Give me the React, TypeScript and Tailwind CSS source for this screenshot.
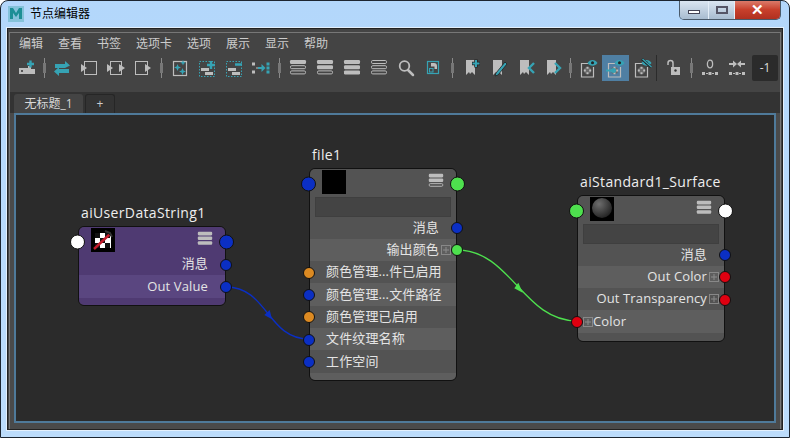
import React from "react";

const TEAL = "#36a3b4";
const GREY = "#bdbdbd";

const menus = ["编辑", "查看", "书签", "选项卡", "选项", "展示", "显示", "帮助"];

function Svg({ children, size = 20 }: { children: React.ReactNode; size?: number }) {
  return (
    <svg width={size} height={size} viewBox="0 0 20 20" fill="none">
      {children}
    </svg>
  );
}

function Stack({ fills, size }: { fills: boolean[]; size?: number }) {
  return (
    <Svg size={size}>
      {fills.map((f, i) => (
        <rect
          key={i}
          x={f ? 2 : 2.5}
          y={(f ? 2 : 2.5) + i * 5.2}
          width={f ? 16 : 15}
          height={f ? 4 : 3}
          rx="1.2"
          fill={f ? GREY : "none"}
          stroke={GREY}
          strokeWidth={f ? 0 : 1}
        />
      ))}
    </Svg>
  );
}

function Bookmark({ children }: { children: React.ReactNode }) {
  return (
    <Svg>
      <path d="M4 2h9v15l-3-3-2 2-1-2-3 3z" fill={GREY} />
      {children}
    </Svg>
  );
}

function NodeFrame() {
  return (
    <>
      <path d="M9 5.500H2.500v13.500h12V9" stroke={GREY} strokeWidth="1.200" />
      <circle cx="8.500" cy="12.500" r="3.600" fill="#6a6a6a" />
      <path d="M7.500 8.800h2v2h-2zM4.800 11.500h2v2h-2zM10.200 11.500h2v2h-2zM7.500 14.200h2v2h-2z" fill={GREY} />
    </>
  );
}

function Eye() {
  return (
    <g>
      <path d="M8.500 5c2.300-4 7.700-4 10 0-2.300 3.500-7.700 3.500-10 0z" fill={TEAL} />
      <circle cx="13.500" cy="4.700" r="1.500" fill="#222" />
    </g>
  );
}

const dotBox = <rect x="2.500" y="3.500" width="15" height="15" stroke={TEAL} strokeDasharray="1.500 1.500" />;
const dotBars = (
  <>
    <rect x="4" y="10" width="8" height="3" fill={GREY} />
    <rect x="8" y="14" width="8" height="3" fill={GREY} />
  </>
);

const icons: Record<string, React.ReactNode> = {
  add: (
    <Svg>
      <path d="M2 10h9V8h3v3h4v5H2z" fill={GREY} />
      <circle cx="5" cy="13" r="1" fill="#333" />
      <path d="M10 6h7M13.500 2.500v7" stroke={TEAL} strokeWidth="2.400" />
    </Svg>
  ),
  swap: (
    <Svg>
      <path d="M3 6h10V3l5 4.500-5 2.500H3z" fill={TEAL} />
      <path d="M17 11H7V9L2 13.500 7 18v-3h10z" fill={TEAL} />
    </Svg>
  ),
  inLeft: (
    <Svg>
      <rect x="5.500" y="3.500" width="12" height="13" stroke={GREY} />
      <path d="M2 6l6 4-6 4z" fill={GREY} />
    </Svg>
  ),
  inBoth: (
    <Svg>
      <rect x="4.500" y="3.500" width="11" height="13" stroke={GREY} />
      <path d="M1 6l6 4-6 4zM13 6l6 4-6 4z" fill={GREY} />
    </Svg>
  ),
  inRight: (
    <Svg>
      <rect x="2.500" y="3.500" width="12" height="13" stroke={GREY} />
      <path d="M12 6l6 4-6 4z" fill={GREY} />
    </Svg>
  ),
  sparkle: (
    <Svg>
      <rect x="3.500" y="3.500" width="13" height="14" stroke={GREY} strokeWidth="1.200" />
      <path d="M7.500 6l1 2.500 2.500 1-2.500 1-1 2.500-1-2.500-2.500-1 2.500-1z" fill={TEAL} />
      <path d="M13 2l.8 2 2 .8-2 .8-.8 2-.8-2-2-.8 2-.8z" fill={TEAL} />
      <path d="M12.500 10l1 2.500 2.500 1-2.500 1-1 2.500-1-2.500-2.500-1 2.500-1z" fill={TEAL} />
    </Svg>
  ),
  dotPlus: (
    <Svg>
      {dotBox}
      {dotBars}
      <path d="M10 7h8M14 3v8" stroke={TEAL} strokeWidth="2.400" />
    </Svg>
  ),
  dotMinus: (
    <Svg>
      {dotBox}
      {dotBars}
      <path d="M11 6.500h7" stroke={TEAL} strokeWidth="2.400" />
    </Svg>
  ),
  links: (
    <Svg>
      <path d="M1 4.500h3v3H1zM1 12.500h3v3H1zM5 9.500h2v1H5z" fill={GREY} />
      <path d="M7 9h3.500V6l4 4-4 4v-3H7z" fill={TEAL} />
      <path d="M15.500 4.500h3v3h-3zM15.500 8.500h3v3h-3zM15.500 12.500h3v3h-3z" fill={TEAL} />
    </Svg>
  ),
  search: (
    <Svg>
      <circle cx="8.500" cy="8" r="4.800" stroke={GREY} strokeWidth="1.800" />
      <path d="M12 12l5 5" stroke={GREY} strokeWidth="2.500" strokeLinecap="round" />
    </Svg>
  ),
  frame: (
    <Svg>
      <rect x="4.500" y="3.500" width="11" height="12" stroke={TEAL} strokeWidth="1.200" />
      <rect x="6.500" y="10.500" width="3.500" height="3.500" stroke={TEAL} />
      <path d="M8 5h3a3 3 0 0 1 3 3v3h-2.500V8.500H8z" fill={GREY} />
    </Svg>
  ),
  bmAdd: (
    <Bookmark>
      <path d="M10 5.500h8M14 1.500v8" stroke="#222" strokeWidth="3.400" />
      <path d="M10.500 5.500h7M14 2v7" stroke={TEAL} strokeWidth="2" />
    </Bookmark>
  ),
  bmEdit: (
    <Bookmark>
      <path d="M7 15L16 4l2 2-9 11-3 1z" fill={TEAL} stroke="#222" strokeWidth=".8" />
    </Bookmark>
  ),
  bmPrev: (
    <Bookmark>
      <path d="M18 5l-5 5 5 5" stroke={TEAL} strokeWidth="2.400" />
    </Bookmark>
  ),
  bmNext: (
    <Bookmark>
      <path d="M12 5l5 5-5 5" stroke={TEAL} strokeWidth="2.400" />
    </Bookmark>
  ),
  eye1: (
    <Svg>
      <NodeFrame />
      <Eye />
    </Svg>
  ),
  eye2: (
    <Svg>
      <NodeFrame />
      <Eye />
      <path d="M0 12.500h7" stroke={TEAL} strokeWidth="1.800" />
      <circle cx="7.500" cy="12.500" r="2.500" fill={TEAL} />
    </Svg>
  ),
  eye3: (
    <Svg>
      <NodeFrame />
      <Eye />
      <path d="M9 1l9 8" stroke="#222" strokeWidth="2.500" />
      <path d="M9.500 1l9 8" stroke={TEAL} strokeWidth="1.300" />
    </Svg>
  ),
  lock: (
    <Svg>
      <rect x="8" y="9" width="9" height="8" fill={GREY} />
      <circle cx="12.500" cy="12.500" r="1.200" fill="#333" />
      <path d="M5 7V5a2.500 2.500 0 0 1 5 0v4" stroke={GREY} strokeWidth="1.500" />
    </Svg>
  ),
  zero: (
    <Svg>
      <ellipse cx="10" cy="6" rx="2.600" ry="3.800" stroke={GREY} strokeWidth="1.300" />
      <path d="M2 14h3v3H2zM8.500 14h3v3h-3zM15 14h3v3h-3zM6 15h2v1H6zM12 15h2v1h-2z" fill={GREY} />
    </Svg>
  ),
  merge: (
    <Svg>
      <path d="M2 5h4V2.500L10 6l-4 3.500V7H2zM18 5h-4V2.500L10 6l4 3.500V7h4z" fill={GREY} />
      <path d="M2 14h3v3H2zM8.500 14h3v3h-3zM15 14h3v3h-3zM6 15h2v1H6zM12 15h2v1h-2z" fill={GREY} />
    </Svg>
  ),
};

function Tool({ name, active }: { name: React.ReactNode; active?: boolean }) {
  return (
    <div className={`flex h-[26px] w-[27px] shrink-0 items-center justify-center ${active ? "bg-[#4f7fa3]" : ""}`}>
      {name}
    </div>
  );
}

function Sep({ className }: { className: string }) {
  return (
    <div className={`flex h-[26px] shrink-0 items-center justify-center ${className}`}>
      <div className="relative h-[20px] w-[1px] bg-[#8a8a8a]">
        <div className="absolute left-[-1px] top-[5px] h-[10px] w-[3px] bg-[#777]" />
      </div>
    </div>
  );
}

function Port({ color, side, big }: { color: string; side: "l" | "r"; big?: boolean }) {
  const size = big ? "h-[15px] w-[15px]" : "h-[12px] w-[12px]";
  const place = side === "l" ? (big ? "left-[-8px]" : "left-[-6px]") : big ? "right-[-8px]" : "right-[-6px]";
  return (
    <div
      className={`absolute top-1/2 -translate-y-1/2 rounded-full border border-[#111] ${size} ${place}`}
      style={{ background: color }}
    />
  );
}

function PlusBox() {
  return (
    <span className="flex h-[10px] w-[10px] shrink-0 items-center justify-center border border-[#888]">
      <svg width="8" height="8" viewBox="0 0 8 8">
        <path d="M1 4h6M4 1v6" stroke="#8c8c8c" />
      </svg>
    </span>
  );
}

type Row = {
  label: string;
  align: "l" | "r";
  port: string;
  plus?: boolean;
  alt?: boolean;
};

function NodeRow({ row, altClass, plainClass }: { row: Row; altClass: string; plainClass: string }) {
  return (
    <div
      className={`flex h-[22.3px] items-center text-[13px] tracking-[0.13px] text-[#e4e4e4] ${row.alt ? altClass : plainClass} ${
        row.align === "r" ? "justify-end pr-[5px]" : "pl-[5px]"
      }`}
    >
      {row.align === "r" ? (
        <div className="flex items-center gap-[2px]">
          <span className={row.plus ? "" : "pr-[12px]"}>{row.label}</span>
          {row.plus && <PlusBox />}
        </div>
      ) : (
        <div className="flex items-center">
          {row.plus ? <PlusBox /> : <span className="w-[11px]" />}
          <span>{row.label}</span>
        </div>
      )}
    </div>
  );
}

function GraphNode({
  title,
  className,
  headClass,
  thumb,
  stack,
  leftPort,
  rightPort,
  field,
  rows,
  altClass,
  plainClass,
  tailClass,
}: {
  title: string;
  className: string;
  headClass: string;
  thumb: React.ReactNode;
  stack: boolean[];
  leftPort: string;
  rightPort: string;
  field?: boolean;
  rows: Row[];
  altClass: string;
  plainClass: string;
  tailClass: string;
}) {
  return (
    <div className={`absolute w-[148px] ${className}`}>
      <div className="absolute left-[3px] top-[-23px] whitespace-nowrap text-[14px] leading-[20px] tracking-[0.35px] text-[#eee]">
        {title}
      </div>
      <div className="overflow-hidden rounded-[6px] border-[1.5px] border-[#111]">
        <div className={headClass}>
          <div className="flex h-[26px] items-start justify-between pl-[12px] pr-[11px] pt-[1px]">
            <div className="h-[24px] w-[24px] shrink-0 bg-black">{thumb}</div>
            <div className="pt-[2px]">
              <Stack fills={stack} size={18} />
            </div>
          </div>
          {field && <div className="mx-[5px] mt-[1.5px] h-[20px] border border-[#3f3f3f] bg-[#444]" />}
        </div>
        {rows.map((r) => (
          <NodeRow key={r.label} row={r} altClass={altClass} plainClass={plainClass} />
        ))}
        <div className={tailClass} />
      </div>
      <div className="absolute left-0 right-0 top-[8px] h-[15px]">
        <Port color={leftPort} side="l" big />
        <Port color={rightPort} side="r" big />
      </div>
      <div className={`absolute left-0 right-0 ${field ? "top-[49px]" : "top-[27.5px]"}`}>
        {rows.map((r) => (
          <div key={r.label} className="relative h-[22.3px]">
            <Port color={r.port} side={r.align} />
          </div>
        ))}
      </div>
    </div>
  );
}

const RED = "#e00010";
const BLUE = "#0b2fc4";
const ORANGE = "#dc8a22";
const GREEN = "#4ee04e";

const checker = (
  <svg width="24" height="24" viewBox="0 0 24 24">
    <rect x="4" y="5" width="16" height="15" fill="#fff" />
    <path d="M4 5h5v5H4zM14 5h5v5h-5zM9 10h5v5H9zM4 15h5v5H4zM14 15h5v5h-5z" fill="#111" />
    <path d="M3 21L19 6" stroke="#c21c2c" strokeWidth="2.400" />
    <path d="M14 3l5 2 2 4" stroke="#333" strokeWidth="2" />
  </svg>
);

const sphere = (
  <svg width="24" height="24" viewBox="0 0 24 24">
    <defs>
      <radialGradient id="ball" cx="0.35" cy="0.3" r="0.8">
        <stop offset="0" stopColor="#6e6e6e" />
        <stop offset="1" stopColor="#1c1c1c" />
      </radialGradient>
    </defs>
    <circle cx="12" cy="11" r="10" fill="url(#ball)" />
  </svg>
);

const PURPLE_ROWS: Row[] = [
  { label: "消息", align: "r", port: BLUE },
  { label: "Out Value", align: "r", port: BLUE, alt: true },
];

const FILE_ROWS: Row[] = [
  { label: "消息", align: "r", port: BLUE },
  { label: "输出颜色", align: "r", port: GREEN, plus: true, alt: true },
  { label: "颜色管理...件已启用", align: "l", port: ORANGE },
  { label: "颜色管理...文件路径", align: "l", port: BLUE, alt: true },
  { label: "颜色管理已启用", align: "l", port: ORANGE },
  { label: "文件纹理名称", align: "l", port: BLUE, alt: true },
  { label: "工作空间", align: "l", port: BLUE },
];

const SURFACE_ROWS: Row[] = [
  { label: "消息", align: "r", port: BLUE },
  { label: "Out Color", align: "r", port: RED, plus: true, alt: true },
  { label: "Out Transparency", align: "r", port: RED, plus: true },
  { label: "Color", align: "l", port: RED, plus: true, alt: true },
];

export default function App() {
  return (
    <div
      className="flex h-[438px] w-[790px] flex-col overflow-hidden rounded-t-[8px] border border-[#1c2530] bg-gradient-to-b from-[#b3d7fb] to-[#bcdcfb]"
      style={{ fontFamily: '"Open Sans", "Noto Sans CJK SC", sans-serif' }}
    >
      {/* title bar */}
      <div className="relative flex h-[27px] shrink-0 items-center gap-[6px] pb-[1px] pl-[7px] text-[12px] text-black">
        <svg width="16" height="16" viewBox="0 0 16 16">
          <rect x="0" y="0" width="16" height="16" fill="#2e9b9e" opacity=".35" />
          <path d="M2 13V2h3l3 5 3-5h3v11h-3V7L8 11 5 7v6z" fill="#1c8f96" />
        </svg>
        <span>节点编辑器</span>
        <div className="absolute right-[8px] top-[-1px] flex h-[20px] overflow-hidden rounded-b-[5px] border border-t-0 border-[#4a5a6a]">
          <div className="flex w-[28px] items-end justify-center bg-gradient-to-b from-[#dde8f3] to-[#a8bcd0] pb-[5px]">
            <div className="h-[4px] w-[12px] border border-[#445] bg-white" />
          </div>
          <div className="flex w-[27px] items-center justify-center border-x border-[#e4eef8] bg-gradient-to-b from-[#dde8f3] to-[#a8bcd0]">
            <div className="h-[8px] w-[12px] border-2 border-[#556]" />
          </div>
          <div className="flex w-[45px] items-center justify-center bg-gradient-to-b from-[#dc8070] via-[#c8402c] to-[#b03020] text-[15px] font-bold leading-none text-white">
            ✕
          </div>
        </div>
      </div>

      {/* client area */}
      <div className="mx-[6px] mb-[7px] flex min-h-0 flex-1 flex-col border border-[#222] bg-[#444] pt-[3px] shadow-[0_0_0_1px_#e4f0fc]">
        <div className="mx-[1px] flex min-h-0 flex-1 flex-col border border-b-0 border-[#777] text-[#cfcfcf]">
          {/* menu bar */}
          <div className="flex h-[22px] shrink-0 items-center gap-[15px] pl-[9px] text-[12px] text-[#cccccc]">
            {menus.map((m) => (
              <span key={m}>{m}</span>
            ))}
          </div>

          {/* toolbar */}
          <div className="flex h-[26px] shrink-0 items-center pl-[3px]">
            <Tool name={icons.add} />
            <Sep className="w-[8px]" />
            <Tool name={icons.swap} />
            <Tool name={icons.inLeft} />
            <Tool name={icons.inBoth} />
            <Tool name={icons.inRight} />
            <Sep className="w-[10px]" />
            <Tool name={icons.sparkle} />
            <Tool name={icons.dotPlus} />
            <Tool name={icons.dotMinus} />
            <Tool name={icons.links} />
            <Sep className="w-[10px]" />
            <Tool name={<Stack fills={[true, false, false]} />} />
            <Tool name={<Stack fills={[true, true, false]} />} />
            <Tool name={<Stack fills={[true, true, true]} />} />
            <Tool name={<Stack fills={[false, false, false]} />} />
            <Tool name={icons.search} />
            <Tool name={icons.frame} />
            <Sep className="w-[12px]" />
            <Tool name={icons.bmAdd} />
            <Tool name={icons.bmEdit} />
            <Tool name={icons.bmPrev} />
            <Tool name={icons.bmNext} />
            <Sep className="w-[9px]" />
            <Tool name={icons.eye1} />
            <Tool name={icons.eye2} active />
            <Tool name={icons.eye3} />
            <div className="h-[26px] w-[1px] shrink-0 bg-[#2b2b2b]" />
            <div className="w-[2px] shrink-0" />
            <Tool name={icons.lock} />
            <Sep className="w-[10px]" />
            <Tool name={icons.zero} />
            <Tool name={icons.merge} />
            <div className="ml-[2px] flex h-[26px] w-[26px] shrink-0 items-center justify-center rounded-[2px] bg-[#2b2b2b] text-[12px] text-[#dcdcdc]">
              -1
            </div>
          </div>

          <div className="h-[11px] shrink-0" />

          {/* tabs */}
          <div className="flex min-h-0 flex-1 flex-col bg-[#333]">
            <div className="flex h-[21px] shrink-0 items-end gap-[2px] pl-[4px]">
              <div className="flex h-[19px] w-[69px] items-center justify-center rounded-t-[3px] bg-[#444] text-[12px] text-[#d8d8d8]">
                无标题_1
              </div>
              <div className="flex h-[19px] w-[30px] items-center justify-center rounded-t-[3px] border border-b-0 border-[#262626] text-[12px] text-[#ccc]">
                +
              </div>
            </div>

            {/* node canvas */}
            <div className="flex min-h-0 flex-1 flex-col bg-[#4a4a4a] px-[4px] pb-[6px]">
              <div className="relative min-h-0 flex-1 border-2 border-[#4f7a9a] bg-[#2b2b2b]">
                {/* canvas origin is x=16, y=115 of the window */}
                <svg className="absolute left-0 top-0" width="760" height="306" fill="none">
                  <path d="M210 172C252 172 251 224 293 224" stroke="#0b2fc4" strokeWidth="1.300" />
                  <path d="M256 204.300L248.300 200 253.700 195z" fill="#0b2fc4" />
                  <path d="M441 135C495 135 507 206 561 206" stroke="#4ee04e" strokeWidth="1.300" />
                  <path d="M506.700 177.700L498.300 173.300 502.300 167.700z" fill="#4ee04e" />
                </svg>
                <GraphNode
                  title="aiUserDataString1"
                  className="left-[62px] top-[111px]"
                  headClass="bg-[#4f3a72]"
                  thumb={checker}
                  stack={[true, true, true]}
                  leftPort="#ffffff"
                  rightPort={BLUE}
                  rows={PURPLE_ROWS}
                  altClass="bg-[#5a4680]"
                  plainClass="bg-[#4f3a72]"
                  tailClass="h-[7px] bg-[#4f3a72]"
                />
                <GraphNode
                  title="file1"
                  className="left-[293px] top-[53px]"
                  headClass="bg-[#535353]"
                  thumb={null}
                  stack={[true, true, false]}
                  leftPort={BLUE}
                  rightPort={GREEN}
                  field
                  rows={FILE_ROWS}
                  altClass="bg-[#5e5e5e]"
                  plainClass="bg-[#535353]"
                  tailClass="h-[7px] bg-[#5e5e5e]"
                />
                <GraphNode
                  title="aiStandard1_Surface"
                  className="left-[561px] top-[80px]"
                  headClass="bg-[#535353]"
                  thumb={sphere}
                  stack={[true, true, true]}
                  leftPort={GREEN}
                  rightPort="#ffffff"
                  field
                  rows={SURFACE_ROWS}
                  altClass="bg-[#5e5e5e]"
                  plainClass="bg-[#535353]"
                  tailClass="h-[8px] bg-[#535353]"
                />
              </div>
            </div>
          </div>
        </div>
      </div>
    </div>
  );
}
